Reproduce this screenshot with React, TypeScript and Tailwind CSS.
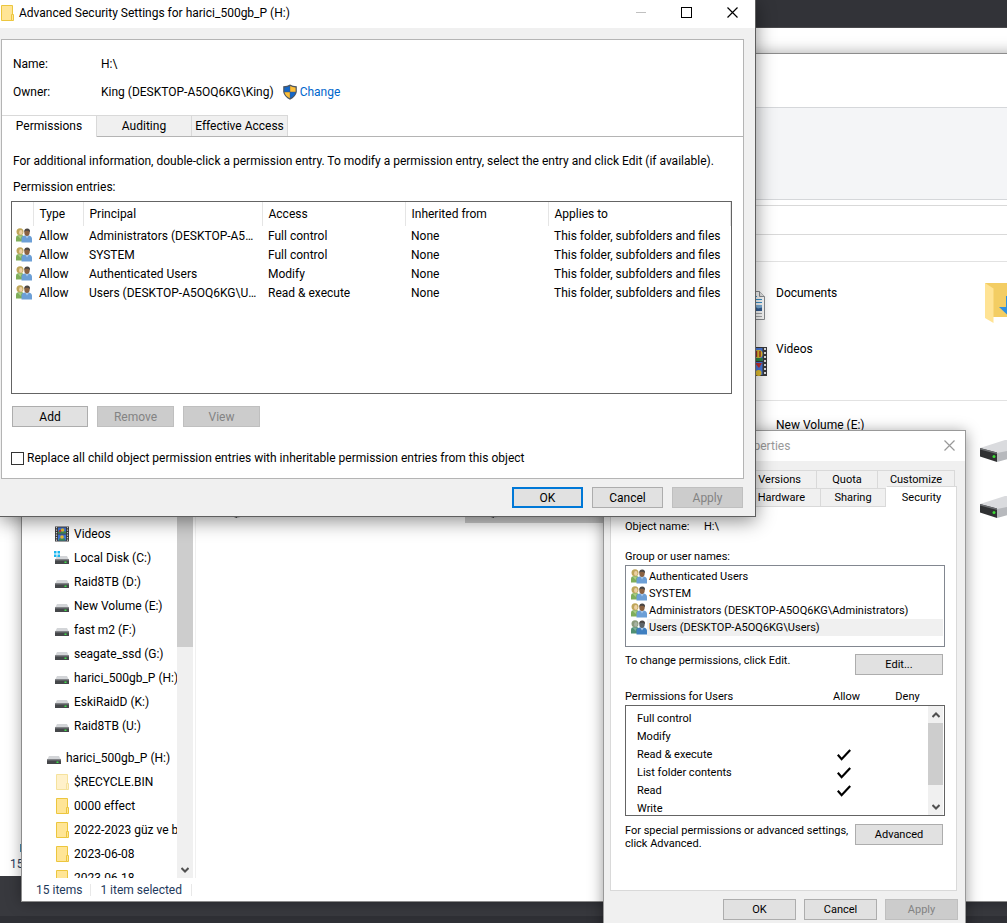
import React from "react";
import clsx from "clsx";

const ENTRIES = [
  { principal: "Administrators (DESKTOP-A5OQ6KG\\Administrators)", access: "Full control" },
  { principal: "SYSTEM", access: "Full control" },
  { principal: "Authenticated Users", access: "Modify" },
  { principal: "Users (DESKTOP-A5OQ6KG\\Users)", access: "Read & execute" },
];

const GROUPS = [
  "Authenticated Users",
  "SYSTEM",
  "Administrators (DESKTOP-A5OQ6KG\\Administrators)",
  "Users (DESKTOP-A5OQ6KG\\Users)",
];

const USER_PERMISSIONS = [
  { name: "Full control", allow: false },
  { name: "Modify", allow: false },
  { name: "Read & execute", allow: true },
  { name: "List folder contents", allow: true },
  { name: "Read", allow: true },
  { name: "Write", allow: false },
];

const DRIVES = [
  "Raid8TB (D:)",
  "New Volume (E:)",
  "fast m2 (F:)",
  "seagate_ssd (G:)",
  "harici_500gb_P (H:)",
  "EskiRaidD (K:)",
  "Raid8TB (U:)",
];

const FOLDERS = ["0000 effect", "2022-2023 güz ve bahar", "2023-06-08", "2023-06-18"];

/* ---------- icons ---------- */

const UsersIcon = ({ selected = false }: { selected?: boolean }) => (
  <svg viewBox="0 0 16 16" className="h-4 w-4 shrink-0" aria-hidden>
    <path d="M0 13.500V9.5Q0 7.5 2 7.2L6 7Q8 7.5 8 10V13.500Z" fill={selected ? "#4f8f72" : "#7fae5a"} />
    <path d="M2 8l2.5 3L6 7.500Z" fill={selected ? "#7fae9c" : "#a9cc84"} />
    <circle cx="4" cy="3.700" r="3.500" fill={selected ? "#8b9a7c" : "#bfa65a"} />
    <ellipse cx="4.800" cy="4.400" rx="1.700" ry="2.300" fill={selected ? "#a9b3a4" : "#ecd0a4"} />
    <path d="M5.500 14.500V10Q6 8 8.500 7.600h4.500Q16 8.200 16 11V14.500Z" fill={selected ? "#3f7fc0" : "#6c9fd6"} />
    <path d="M9.500 8l1.500 2.500 1.700-2.500Z" fill="#a8c8ea" />
    <ellipse cx="11" cy="4.600" rx="2.700" ry="3.400" fill={selected ? "#5d6468" : "#8a6242"} />
    <path d="M8.300 4.200Q8 0.600 11.200 0.600T14 4.200Q12.500 2.600 10.500 2.800 9 2.800 8.300 4.200Z" fill="#4a4644" />
  </svg>
);

const ShieldIcon = () => (
  <svg viewBox="0 0 14 16" className="h-4 w-[14px] shrink-0" aria-hidden>
    <path d="M7 0.500Q9.500 2.300 13.800 2.300V8Q12.800 13 7 15.700 1.200 13 0.200 8V2.300Q4.500 2.300 7 0.500Z" fill="#4d5660" />
    <path d="M6.800 2V7.800H1.400V3.400Q4.600 3.300 6.800 2Z" fill="#1467c8" />
    <path d="M7.200 2V7.800H12.600V3.400Q9.400 3.300 7.200 2Z" fill="#fdbf38" />
    <path d="M6.800 8.200V14.300Q2.300 12 1.500 8.200Z" fill="#fdbf38" />
    <path d="M7.200 8.200V14.300Q11.700 12 12.500 8.200Z" fill="#1467c8" />
  </svg>
);

const FolderIcon = ({ faded = false }: { faded?: boolean }) => (
  <svg viewBox="0 0 14 16" className={clsx("h-4 w-[14px] shrink-0", faded && "opacity-50")} aria-hidden>
    <path d="M1.500 0.500H12.500V15.500H1.500Z" fill="#ffe596" stroke="#ecc63e" />
    <path d="M11.500 9.500H13.500V15.500H11.500Z" fill="#ffe596" stroke="#ecc63e" />
  </svg>
);

const SmallDriveIcon = ({ system = false }: { system?: boolean }) => (
  <svg viewBox="0 0 16 16" className="h-4 w-4 shrink-0 overflow-visible" aria-hidden>
    <path d="M3 6H13L15 10H1Z" fill="#d3d5d8" />
    <path d="M1 9.500H15V14H1Z" fill="#45474a" />
    <path d="M1 9.500H15V10.500H1Z" fill="#76797c" />
    <path d="M10.500 11.500H12.500V13H10.500Z" fill="#3ee04a" />
    {system && (
      <path d="M0 1H2.500V3.500H0ZM3.500 1H6V3.500H3.500ZM0 4.500H2.500V7H0ZM3.500 4.500H6V7H3.500Z" fill="#19b5ee" />
    )}
  </svg>
);

const SmallFilmIcon = () => (
  <svg viewBox="0 0 16 16" className="h-4 w-4 shrink-0" aria-hidden>
    <path d="M1 0.500H15V15.500H1Z" fill="#3a3a3c" />
    <path d="M4 1.500H12V7.500H4ZM4 8.500H12V14.500H4Z" fill="#3f74d6" />
    <path d="M4 5.500H12V7.500H4ZM5 12.500H11V14.500H5Z" fill="#3f8a4c" />
    <circle cx="8.500" cy="4" r="1.800" fill="#e8b92e" />
    <circle cx="6" cy="5" r="1.200" fill="#c23a3a" />
    <circle cx="8" cy="11" r="1.800" fill="#e8b92e" />
    <path d="M2.500 1V15M13.500 1V15" stroke="#d8d8d8" strokeWidth="1.200" strokeDasharray="1.200 1.300" />
  </svg>
);

const DocumentsIcon = () => (
  <svg viewBox="0 0 48 48" className="h-12 w-12 shrink-0" aria-hidden>
    <path d="M6 5H33V43H6Z" fill="#f0cc66" />
    <path d="M14 15.500H36.500L41.500 20.500V43.500H14Z" fill="#fff" stroke="#8b8e91" />
    <path d="M36.500 15.500V20.500H41.500" fill="#e8e8e8" stroke="#8b8e91" />
    <path d="M16 20.500H34M16 23.500H39M16 26.500H39" stroke="#3a95d0" />
    <path d="M28 29H39V35H28Z" fill="#7fb2dc" />
    <path d="M28 35V32.500Q32 30 35 32.500L39 31.500V35Z" fill="#355f94" />
    <path d="M16 37.500H39M16 40.500H39" stroke="#a9acae" />
  </svg>
);

const FilmIcon = () => (
  <svg viewBox="0 0 48 48" className="h-12 w-12 shrink-0" aria-hidden>
    <path d="M6 7H33V43H6Z" fill="#f0cc66" />
    <path d="M14 15H44V44H14Z" fill="#3a3a3c" />
    <path d="M20 16H39.500V29H20ZM20 30H39.500V43H20Z" fill="#4a7be0" />
    <path d="M20 26H39.500V29H20Z" fill="#2c8a45" />
    <circle cx="35.500" cy="22" r="4" fill="#e8c32e" />
    <path d="M33.500 19V25M37 19V25" stroke="#a02d2d" strokeWidth="1.400" />
    <path d="M32 31H39L36 36Z" fill="#c92f2f" />
    <circle cx="35.500" cy="41" r="3" fill="#e8c32e" />
    <path d="M42 16V43" stroke="#e4e4e4" strokeWidth="2" strokeDasharray="2 2" />
  </svg>
);

const DownloadsIcon = () => (
  <svg viewBox="0 0 48 48" className="h-12 w-12 shrink-0" aria-hidden>
    <path d="M5 7H46V41H13Z" fill="#f3cd63" />
    <path d="M5 7L13.500 12.500V47L5 42Z" fill="#ffe394" />
    <path d="M26 20H38V31H45L32 43 19 31H26Z" fill="#2f8fe0" />
  </svg>
);

const DriveIcon = () => (
  <svg viewBox="0 0 48 48" className="h-12 w-12 shrink-0 overflow-visible" aria-hidden>
    <path d="M0 35L25 27H46V36L18 43Z" fill="#dadbde" />
    <path d="M17 40L46 34V41L17 49Z" fill="#b7b9bd" />
    <path d="M0 35L17 39.500V49L0 43.500Z" fill="#303133" />
    <path d="M0 35L17 39.500V41L0 36.500Z" fill="#6b6d70" />
    <circle cx="14" cy="43.500" r="1.500" fill="#3bdc35" />
  </svg>
);

const CheckIcon = () => (
  <svg viewBox="0 0 14 12" className="h-3 w-[14px]" aria-hidden>
    <path d="M0.800 5.800L4.600 10.200 13.200 1" fill="none" stroke="#000" strokeWidth="2.200" />
  </svg>
);

const CloseIcon = () => (
  <svg viewBox="0 0 11 11" className="h-[11px] w-[11px]" aria-hidden>
    <path d="M0.500 0.500L10.500 10.500M10.500 0.500L0.500 10.500" stroke="currentColor" strokeWidth="1.200" />
  </svg>
);

const Chevron = ({ up = false }: { up?: boolean }) => (
  <svg viewBox="0 0 8 6" className="h-[6px] w-2" aria-hidden>
    <path d={up ? "M0.500 5L4 1.500 7.500 5" : "M0.500 1L4 4.500 7.500 1"} fill="none" stroke="#505050" strokeWidth="2" />
  </svg>
);

/* ---------- shared controls ---------- */

interface DialogButtonProps {
  children: React.ReactNode;
  className?: string;
  primary?: boolean;
  disabled?: boolean;
}

const DialogButton = ({ children, className, primary = false, disabled = false }: DialogButtonProps) => (
  <button
    type="button"
    disabled={disabled}
    className={clsx(
      "flex h-[21px] shrink-0 items-center justify-center",
      disabled
        ? "border border-[#bfbfbf] bg-[#cccccc] text-[#838383]"
        : primary
        ? "border-2 border-[#0078d7] bg-[#e1e1e1]"
        : "border border-[#adadad] bg-[#e1e1e1]",
      className
    )}
  >
    {children}
  </button>
);

/* ---------- explorer window ---------- */

interface NavRowProps {
  icon: React.ReactNode;
  label: string;
  root?: boolean;
}

const NavRow = ({ icon, label, root = false }: NavRowProps) => (
  <li className={clsx("flex h-6 shrink-0 items-center gap-1", root ? "mt-2 pl-6" : "pl-8")}>
    <span className="flex w-4 shrink-0 justify-center">{icon}</span>
    <span className="whitespace-nowrap">{label}</span>
  </li>
);

const ExplorerWindow = () => (
  <section className="absolute top-[53px] right-[-40px] bottom-[21px] left-[21px] flex flex-col border border-[#8c8c8c] bg-white shadow-[0_0_14px_rgba(0,0,0,0.35)]">
    <div className="h-[53px] shrink-0" />
    <div className="h-[93px] shrink-0 border-y border-[#d5d7da] bg-[#f4f5f7]" />
    <div className="mt-[5px] h-[30px] shrink-0 border-y border-[#d9d9d9]" />
    <div className="flex min-h-0 flex-1">
      <nav className="flex w-[171px] shrink-0 overflow-hidden">
        <ul className="min-w-0 flex-1 overflow-hidden pt-[287px]">
          <NavRow icon={<SmallFilmIcon />} label="Videos" />
          <NavRow icon={<SmallDriveIcon system />} label="Local Disk (C:)" />
          {DRIVES.map((drive) => (
            <NavRow key={drive} icon={<SmallDriveIcon />} label={drive} />
          ))}
          <NavRow root icon={<SmallDriveIcon />} label="harici_500gb_P (H:)" />
          <NavRow icon={<FolderIcon faded />} label="$RECYCLE.BIN" />
          {FOLDERS.map((folder) => (
            <NavRow key={folder} icon={<FolderIcon />} label={folder} />
          ))}
        </ul>
        <div className="flex w-4 flex-col items-center bg-[#f0f0f0]">
          <div className="h-[412px] w-full shrink-0 bg-[#cdcdcd]" />
          <div className="flex flex-1 items-end pb-[5px]">
            <Chevron />
          </div>
        </div>
      </nav>
      <div className="ml-[2px] min-w-0 flex-1 overflow-hidden border-l border-[#f0f0f0] pt-[26px]">
        <div className="grid auto-rows-[54px] grid-cols-[repeat(4,255px)] gap-[2px] border-t border-[#e2e2e2] pt-[14px] pb-[14px] pl-3">
          <div className="col-start-3 flex gap-[5px] pl-px">
            <DocumentsIcon />
            <span className="pt-[9px]">Documents</span>
          </div>
          <div className="pl-px">
            <DownloadsIcon />
          </div>
          <div className="col-start-3 flex gap-[5px] pl-px">
            <FilmIcon />
            <span className="pt-[9px]">Videos</span>
          </div>
        </div>
        <div className="grid auto-rows-[54px] grid-cols-[repeat(4,255px)] gap-[2px] border-t border-[#e2e2e2] pt-3 pl-3">
          <div className="col-start-3 flex gap-[5px] pl-px">
            <span className="w-12" />
            <span className="pt-1">New Volume (E:)</span>
          </div>
          <div className="pl-px">
            <DriveIcon />
          </div>
          <div className="pl-3">
            <DriveIcon />
          </div>
          <div className="bg-[#cccccc] pl-3">
            <DriveIcon />
          </div>
          <div className="col-start-4 pl-px">
            <DriveIcon />
          </div>
        </div>
      </div>
    </div>
    <footer className="flex h-[23px] shrink-0 items-center text-[#1e395b]">
      <span className="border-r border-[#e8e8e8] pr-2 pl-[14px] leading-3">15 items</span>
      <span className="border-r border-[#e8e8e8] px-[9px] leading-3">1 item selected</span>
    </footer>
  </section>
);

/* ---------- drive properties ---------- */

const TAB = "flex items-center justify-center border-t border-r border-[#d9d9d9] bg-[#f0f0f0]";

const PropertiesWindow = () => (
  <section className="absolute top-[430px] left-[603px] w-[363px] border border-[#999] bg-[#f0f0f0] pb-4 text-[11px] leading-[13px] shadow-[0_2px_14px_rgba(0,0,0,0.4)]">
    <header className="flex h-[30px] items-center justify-between bg-white pr-[10px] pl-6 text-xs text-[#999]">
      <span>harici_500gb_P (H:) Properties</span>
      <button type="button" aria-label="Close" className="pb-[2px]">
        <CloseIcon />
      </button>
    </header>
    <div className="mt-[9px] mr-[8px] ml-[6px]">
      <div role="tablist">
        <div className="mr-[2px] flex h-[18px]">
          <button type="button" role="tab" className={clsx(TAB, "flex-1 justify-end pr-[15px]")}>
            Previous Versions
          </button>
          <button type="button" role="tab" className={clsx(TAB, "w-[61px]")}>
            Quota
          </button>
          <button type="button" role="tab" className={clsx(TAB, "w-[77px]")}>
            Customize
          </button>
        </div>
        <div className="flex h-[18px]">
          <button type="button" role="tab" className={clsx(TAB, "flex-1 justify-end pr-[15px]")}>
            Hardware
          </button>
          <button type="button" role="tab" className={clsx(TAB, "w-[65px]")}>
            Sharing
          </button>
          <button
            type="button"
            role="tab"
            aria-selected
            className="relative -mt-[2px] -mb-px w-[71px] border-x border-t border-[#d9d9d9] border-l-transparent bg-white"
          >
            Security
          </button>
        </div>
      </div>
      <div className="border border-[#d9d9d9] bg-white pt-[13px] pr-[13px] pb-10 pl-[14px]">
        <div className="flex">
          <span className="w-[79px]">Object name:</span>
          <span>H:\</span>
        </div>
        <p className="mt-[17px]">Group or user names:</p>
        <ul className="mt-[2px] mr-[-2px] h-[82px] border border-[#828790] px-px pt-[2px]">
          {GROUPS.map((group, i) => {
            const selected = i === GROUPS.length - 1;
            return (
              <li key={group} className="flex h-[17px] items-center pl-1">
                <UsersIcon selected={selected} />
                <span className={clsx("flex-1 pl-[2px] leading-[17px]", selected && "bg-[#f0f0f0]")}>{group}</span>
              </li>
            );
          })}
        </ul>
        <div className="mt-[7px] flex items-start justify-between">
          <span>To change permissions, click Edit.</span>
          <DialogButton className="w-[88px]">Edit...</DialogButton>
        </div>
        <div className="mt-[15px] flex">
          <span className="flex-1">Permissions for Users</span>
          <span className="w-[61px] text-center">Allow</span>
          <span className="w-[61px] text-center">Deny</span>
          <span className="w-[5px]" />
        </div>
        <div className="mt-[2px] mr-[-2px] flex h-[111px] overflow-hidden border border-[#646464]">
          <div className="flex-1 overflow-hidden pt-[3px]">
            <table className="w-full table-fixed">
              <tbody>
                {USER_PERMISSIONS.map(({ name, allow }) => (
                  <tr key={name} className="h-[18px]">
                    <td className="p-0 pl-[11px]">{name}</td>
                    <td className="w-[91px] p-0 pt-[2px]">{allow && <CheckIcon />}</td>
                  </tr>
                ))}
              </tbody>
            </table>
          </div>
          <div className="mr-px flex w-[15px] flex-col items-center bg-[#f0f0f0] pt-[6px] pb-[5px]">
            <Chevron up />
            <div className="mt-[5px] h-[62px] w-full bg-[#cdcdcd]" />
            <div className="flex-1" />
            <Chevron />
          </div>
        </div>
        <div className="mt-2 flex items-start justify-between">
          <span className="w-[226px]">For special permissions or advanced settings, click Advanced.</span>
          <DialogButton className="w-[88px]">Advanced</DialogButton>
        </div>
      </div>
    </div>
    <div className="mt-2 flex justify-end gap-2 pr-[7px]">
      <DialogButton className="w-[73px]">OK</DialogButton>
      <DialogButton className="w-[73px]">Cancel</DialogButton>
      <DialogButton disabled className="w-[73px]">
        Apply
      </DialogButton>
    </div>
  </section>
);

/* ---------- advanced security settings ---------- */

const HEAD_CELL = "border-r border-[#e5e5e5] p-0 pl-[6px] text-left font-normal";

const AdvancedSecurityWindow = () => (
  <section className="absolute top-0 left-0 w-[756px] border-r border-b border-[#5f5f5f] bg-[#f0f0f0] pb-2 shadow-[0_4px_18px_rgba(0,0,0,0.45)]">
    <header className="flex h-7 items-center bg-white pr-[17px] pb-[2px]">
      <FolderIcon />
      <h1 className="flex-1 pl-[5px]">Advanced Security Settings for harici_500gb_P (H:)</h1>
      <div className="flex items-center gap-[35px] pb-[2px]">
        <button type="button" aria-label="Minimize" className="h-px w-[10px] bg-[#c0c0c0]" />
        <button type="button" aria-label="Maximize" className="h-[11px] w-[11px] border border-black" />
        <button type="button" aria-label="Close">
          <CloseIcon />
        </button>
      </div>
    </header>

    <div className="mt-[11px] mr-[11px] ml-px border border-[#b4b4b4] bg-white">
      <dl className="grid grid-cols-[88px_1fr] gap-y-3 pt-4 pl-[11px]">
        <dt>Name:</dt>
        <dd>H:\</dd>
        <dt>Owner:</dt>
        <dd className="flex items-center">
          <span className="pr-[9px]">King (DESKTOP-A5OQ6KG\King)</span>
          <ShieldIcon />
          <a href="#change" className="pl-[3px] text-[#0066cc]">
            Change
          </a>
        </dd>
      </dl>

      <div role="tablist" className="mt-[15px] flex h-[22px]">
        <button
          type="button"
          role="tab"
          aria-selected
          className="w-[95px] border-t border-r border-[#d9d9d9] bg-white pb-px"
        >
          Permissions
        </button>
        <div className="flex flex-1 border-b border-[#b4b4b4]">
          <button type="button" role="tab" className="w-[95px] border-t border-r border-[#d9d9d9] bg-[#f0f0f0]">
            Auditing
          </button>
          <button type="button" role="tab" className="w-[96px] border-t border-r border-[#d9d9d9] bg-[#f0f0f0] whitespace-nowrap">
            Effective Access
          </button>
        </div>
      </div>

      <div className="px-[9px] pt-4 pb-3">
        <p className="px-[2px] whitespace-nowrap">
          For additional information, double-click a permission entry. To modify a permission entry, select the entry and
          click Edit (if available).
        </p>
        <p className="mt-[10px] px-[2px]">Permission entries:</p>
        <div className="mt-[6px] mr-[2px] h-[193px] border border-[#646464]">
          <table className="w-full table-fixed">
            <thead>
              <tr className="h-[24px]">
                <th className={clsx(HEAD_CELL, "w-[21px]")} />
                <th className={clsx(HEAD_CELL, "w-[50px]")}>Type</th>
                <th className={clsx(HEAD_CELL, "w-[179px]")}>Principal</th>
                <th className={clsx(HEAD_CELL, "w-[143px]")}>Access</th>
                <th className={clsx(HEAD_CELL, "w-[143px]")}>Inherited from</th>
                <th className={HEAD_CELL}>Applies to</th>
              </tr>
            </thead>
            <tbody>
              {ENTRIES.map(({ principal, access }) => (
                <tr key={principal} className="h-[19px]">
                  <td className="p-0 pl-1">
                    <UsersIcon />
                  </td>
                  <td className="p-0 pl-[6px]">Allow</td>
                  <td className="truncate p-0 pr-1 pl-[6px]">{principal}</td>
                  <td className="p-0 pl-[6px]">{access}</td>
                  <td className="p-0 pl-[6px]">None</td>
                  <td className="p-0 pl-[6px] whitespace-nowrap">This folder, subfolders and files</td>
                </tr>
              ))}
            </tbody>
          </table>
        </div>
        <div className="mt-3 flex gap-[9px] pl-px">
          <DialogButton className="w-[76px]">Add</DialogButton>
          <DialogButton disabled className="w-[77px]">
            Remove
          </DialogButton>
          <DialogButton disabled className="w-[77px]">
            View
          </DialogButton>
        </div>
        <label className="mt-[23px] flex items-center gap-[3px]">
          <input type="checkbox" className="h-[13px] w-[13px] appearance-none border border-[#333] bg-white" />
          Replace all child object permission entries with inheritable permission entries from this object
        </label>
      </div>
    </div>

    <div className="mt-2 flex justify-end gap-[9px] pr-[12px]">
      <DialogButton primary className="w-[71px]">
        OK
      </DialogButton>
      <DialogButton className="w-[71px]">Cancel</DialogButton>
      <DialogButton disabled className="w-[71px]">
        Apply
      </DialogButton>
    </div>
  </section>
);

export default function App() {
  return (
    <main className="relative h-screen w-full overflow-hidden bg-[#38393e] font-[Roboto,'Liberation_Sans',sans-serif] text-xs text-black">
      {/* taskbar */}
      <div className="absolute inset-x-0 bottom-0 h-[7px] bg-[#2f3035]" />
      <div className="absolute inset-x-0 top-0 h-7 bg-[#323338]" />

      {/* second explorer window, mostly covered */}
      <section className="absolute top-[27px] right-0 bottom-[47px] left-0 flex flex-col justify-end border-t border-[#4a4a4d] bg-white pb-1 pl-[10px] text-[#1e395b]">
        <span className="mb-1 ml-[10px] h-2 w-4 border border-[#4a8db0] bg-[#e6f3fa]" />
        <span>15 items</span>
      </section>

      <ExplorerWindow />
      <PropertiesWindow />
      <AdvancedSecurityWindow />
    </main>
  );
}
